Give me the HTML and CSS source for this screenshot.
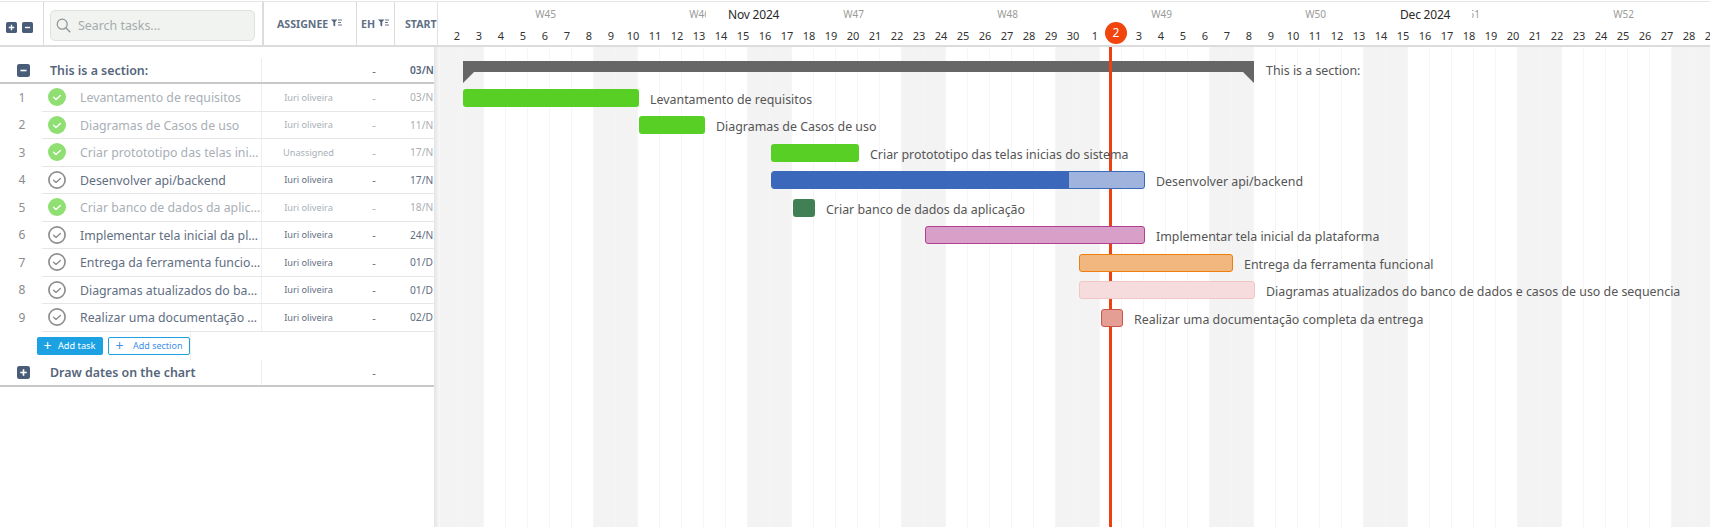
FILE: index.html
```html
<!DOCTYPE html>
<html lang="en">
<head>
<meta charset="utf-8">
<title>Gantt</title>
<link rel="stylesheet" href="styles.css">
</head>
<body>
<svg class="defs" width="0" height="0" aria-hidden="true">
  <symbol id="done" viewBox="0 0 18 18"><circle cx="9" cy="9" r="9" fill="#8fdf72"/><path d="M5.6 9.2l2.4 2.2 4.4-4" fill="none" stroke="#fff" stroke-width="1.4" stroke-linecap="round" stroke-linejoin="round"/></symbol>
  <symbol id="todo" viewBox="0 0 18 18"><circle cx="9" cy="9" r="8.1" fill="none" stroke="#8f8f8f" stroke-width="1.7"/><path d="M5.6 9.2l2.4 2.2 4.4-4" fill="none" stroke="#8a8a8a" stroke-width="1.3" stroke-linecap="round" stroke-linejoin="round"/></symbol>
  <symbol id="plusbox" viewBox="0 0 12 12"><rect width="12" height="12" rx="2" fill="#495d79"/><path d="M3 6h6M6 3v6" stroke="#fff" stroke-width="1.5"/></symbol>
  <symbol id="minusbox" viewBox="0 0 12 12"><rect width="12" height="12" rx="2" fill="#495d79"/><path d="M3.2 6h5.6" stroke="#fff" stroke-width="1.5"/></symbol>
  <symbol id="filter" viewBox="0 0 11 8"><path d="M0 .5h6.4L4.2 3V7.5L2.4 6.4V3z" fill="#55657c"/><path d="M7 1h4M7 3.5h3M7 6h4" stroke="#66758a" stroke-width="1"/></symbol>
</svg>
<div class="app">
  <section class="panel">
    <header class="thead">
      <div class="toggles">
        <svg class="tg"><use href="#plusbox"/></svg>
        <svg class="tg"><use href="#minusbox"/></svg>
      </div>
      <div class="searchcell">
        <div class="search">
          <svg class="mag" viewBox="0 0 15 15"><circle cx="6.2" cy="6.2" r="5" fill="none" stroke="#8d9296" stroke-width="1.2"/><path d="M9.8 9.8l4.4 4.4" stroke="#8d9296" stroke-width="1.3"/></svg>
          <span>Search tasks...</span>
        </div>
      </div>
      <div class="th th-a">ASSIGNEE<svg class="fl"><use href="#filter"/></svg></div>
      <div class="th th-e">EH<svg class="fl"><use href="#filter"/></svg></div>
      <div class="th th-s">START</div>
    </header>
    <div class="tbody">
      <div class="secrow first">
        <svg class="st"><use href="#minusbox"/></svg>
        <div class="sectitle">This is a section:</div>
        <div class="c-a"></div><div class="c-e">-</div><div class="c-s strong">03/N</div>
      </div>
      <div class="row done"><div class="num">1</div><svg class="chk"><use href="#done"/></svg><div class="title">Levantamento de requisitos</div><div class="c-a">Iuri oliveira</div><div class="c-e">-</div><div class="c-s">03/N</div></div>
      <div class="row done"><div class="num">2</div><svg class="chk"><use href="#done"/></svg><div class="title">Diagramas de Casos de uso</div><div class="c-a">Iuri oliveira</div><div class="c-e">-</div><div class="c-s">11/N</div></div>
      <div class="row done"><div class="num">3</div><svg class="chk"><use href="#done"/></svg><div class="title">Criar protototipo das telas inicias do sistema</div><div class="c-a">Unassigned</div><div class="c-e">-</div><div class="c-s">17/N</div></div>
      <div class="row"><div class="num">4</div><svg class="chk"><use href="#todo"/></svg><div class="title">Desenvolver api/backend</div><div class="c-a">Iuri oliveira</div><div class="c-e">-</div><div class="c-s">17/N</div></div>
      <div class="row done"><div class="num">5</div><svg class="chk"><use href="#done"/></svg><div class="title">Criar banco de dados da aplicação</div><div class="c-a">Iuri oliveira</div><div class="c-e">-</div><div class="c-s">18/N</div></div>
      <div class="row"><div class="num">6</div><svg class="chk"><use href="#todo"/></svg><div class="title">Implementar tela inicial da plataforma</div><div class="c-a">Iuri oliveira</div><div class="c-e">-</div><div class="c-s">24/N</div></div>
      <div class="row"><div class="num">7</div><svg class="chk"><use href="#todo"/></svg><div class="title">Entrega da ferramenta funcional</div><div class="c-a">Iuri oliveira</div><div class="c-e">-</div><div class="c-s">01/D</div></div>
      <div class="row"><div class="num">8</div><svg class="chk"><use href="#todo"/></svg><div class="title">Diagramas atualizados do banco de dados e casos de uso de sequencia</div><div class="c-a">Iuri oliveira</div><div class="c-e">-</div><div class="c-s">01/D</div></div>
      <div class="row"><div class="num">9</div><svg class="chk"><use href="#todo"/></svg><div class="title">Realizar uma documentação completa da entrega</div><div class="c-a">Iuri oliveira</div><div class="c-e">-</div><div class="c-s">02/D</div></div>
      <div class="addrow">
        <button class="btn btn-fill"><span class="pl">+</span>Add task</button>
        <button class="btn btn-line"><span class="pl">+</span>Add section</button>
      </div>
      <div class="secrow">
        <svg class="st"><use href="#plusbox"/></svg>
        <div class="sectitle">Draw dates on the chart</div>
        <div class="c-a"></div><div class="c-e">-</div><div class="c-s"></div>
      </div>
    </div>
  </section>
  <section class="chart">
    <header class="chead" id="chead">
      <div class="weeks">
        <span>W45</span><span>W46</span><span>W47</span><span>W48</span><span>W49</span><span>W50</span><span>W51</span><span>W52</span>
      </div>
      <div class="days" id="days"></div>
      <div class="month" style="left:269px">Nov 2024</div>
      <div class="month" style="left:941px">Dec 2024</div>
      <div class="today">2</div>
    </header>
    <div class="cbody">
      <div class="cols" id="cols"></div>
      <div class="nowline"></div>
      <div class="sbar-row"><div class="sbar" style="margin-left:23px;width:791px"></div><span class="blabel sl">This is a section:</span></div>
      <div class="brow"><div class="bar green" style="margin-left:23px;width:176px"></div><span class="blabel">Levantamento de requisitos</span></div>
      <div class="brow"><div class="bar green" style="margin-left:199px;width:66px"></div><span class="blabel">Diagramas de Casos de uso</span></div>
      <div class="brow"><div class="bar green" style="margin-left:331px;width:88px"></div><span class="blabel">Criar protototipo das telas inicias do sistema</span></div>
      <div class="brow"><div class="bar blue" style="margin-left:331px;width:374px"><i class="prog"></i></div><span class="blabel">Desenvolver api/backend</span></div>
      <div class="brow"><div class="bar dgreen" style="margin-left:353px;width:22px"></div><span class="blabel">Criar banco de dados da aplicação</span></div>
      <div class="brow"><div class="bar pink" style="margin-left:485px;width:220px"></div><span class="blabel">Implementar tela inicial da plataforma</span></div>
      <div class="brow"><div class="bar orange" style="margin-left:639px;width:154px"></div><span class="blabel">Entrega da ferramenta funcional</span></div>
      <div class="brow"><div class="bar lpink" style="margin-left:639px;width:176px"></div><span class="blabel">Diagramas atualizados do banco de dados e casos de uso de sequencia</span></div>
      <div class="brow"><div class="bar salmon" style="margin-left:661px;width:22px"></div><span class="blabel">Realizar uma documentação completa da entrega</span></div>
    </div>
  </section>
</div>
<script src="app.js"></script>
</body>
</html>
```
FILE: styles.css
```css
* { box-sizing: border-box; }
html, body { margin: 0; height: 100%; background: #fff; overflow: hidden; }
body { font-family: "Noto Sans", "Liberation Sans", sans-serif; color: #55657b; }
.defs { position: absolute; }
.app { display: flex; height: 526px; margin-top: 1px; border-top: 1px solid #e6e6e6; }

/* left panel */
.panel { position: relative; z-index: 3; width: 437px; flex: none; display: flex; flex-direction: column; }
.thead { display: flex; height: 45px; flex: none; border-bottom: 2px solid #dcdcdc; overflow: hidden; }
.toggles { width: 44px; flex: none; display: flex; gap: 5px; padding: 20px 0 0 6px; border-right: 1px solid #dcdcdc; }
.tg { width: 11px; height: 11px; }
.searchcell { width: 220px; flex: none; padding: 8px 7px 0 6px; border-right: 2px solid #dcdcdc; }
.search { height: 31px; display: flex; align-items: center; gap: 7px; padding-left: 5px; background: #f1f3f0; border: 1px solid #e0e2df; border-radius: 5px; font-size: 12.4px; color: #a6abaf; }
.mag { width: 15px; height: 15px; }
.th { display: flex; align-items: center; height: 43px; font-size: 10.6px; font-weight: 700; color: #5f6f85; border-right: 1px solid #dcdcdc; white-space: nowrap; }
.th-a { width: 93px; flex: none; padding-left: 13px; }
.th-e { width: 38px; flex: none; padding-left: 4px; }
.th-s { width: 40px; flex: none; padding-left: 10px; border-right: 0; }
.fl { width: 11px; height: 8px; margin: 0 0 2px 3px; flex: none; }

.tbody { position: relative; flex: 1; width: 434px; padding-top: 11px; }
.tbody::after { content: ""; position: absolute; left: 100%; top: 0; bottom: 0; width: 6px; background: linear-gradient(90deg, #e4e4e4, #f9f9f9); }
.secrow { display: flex; align-items: center; height: 27px; border-bottom: 2px solid #c8c8c8; }
.secrow.first { height: 26px; }
.st { width: 13px; height: 13px; margin-left: 17px; flex: none; }
.sectitle { width: 232px; flex: none; padding-left: 20px; font-size: 12.4px; font-weight: 600; color: #55657b; white-space: nowrap; align-self: stretch; display: flex; align-items: center; border-right: 1px solid #eee; }
.row { display: flex; align-items: center; height: 27.5px; margin-left: 42px; border-bottom: 1px solid #e6e6e6; color: #5f6e82; }
.num { width: 0; flex: none; margin-left: -20px; margin-right: 20px; font-size: 12px; color: #8a8a8a; display: flex; justify-content: center; }
.chk { width: 18px; height: 18px; margin-left: 6px; flex: none; }
.title { width: 196px; height: 100%; line-height: 27px; flex: none; padding: 0 0 0 14px; font-size: 12.3px; white-space: nowrap; overflow: hidden; text-overflow: ellipsis; border-right: 1px solid #eee; }
.c-a { width: 93px; flex: none; text-align: center; font-size: 9.2px; }
.c-e { width: 38px; flex: none; text-align: center; font-size: 11px; }
.c-s { padding-left: 17px; font-size: 10.2px; white-space: nowrap; }
.strong { font-weight: 600; color: #55657b; }
.done { color: #a9afb6; }
.done .num { color: #8f8f8f; }

.addrow { display: flex; align-items: center; gap: 5px; width: 191px; height: 28px; padding-left: 37px; border-right: 1px solid #eee; }
.btn { display: flex; align-items: center; flex: none; height: 18px; padding: 0; border-radius: 2px; font: 9.2px "Noto Sans", sans-serif; white-space: nowrap; }
.pl { font-size: 14px; line-height: 14px; width: 21px; text-align: center; }
.btn-fill { width: 66px; background: #1ca2e3; border: 0; color: #fff; }
.btn-line { width: 82px; background: #fff; border: 1px solid #1ca2e3; color: #3f8fe8; gap: 3px; font-size: 9px; }

/* chart */
.chart { flex: 1; min-width: 0; position: relative; overflow: hidden; }
.chead { position: relative; height: 45px; border-bottom: 2px solid #dcdcdc; box-shadow: inset 1px 0 #e2e2e2; }
.weeks { display: flex; height: 24px; padding-left: 31.5px; align-items: center; }
.weeks span { width: 154px; flex: none; text-align: center; font-size: 10px; color: #9a9a9a; }
.days { display: flex; padding-left: 9px; height: 19px; align-items: center; }
.days span { width: 22px; flex: none; text-align: center; font-size: 11px; color: #333; }
.month { position: absolute; top: 4px; padding: 0 22px; background: #fff; font-size: 12px; letter-spacing: -0.2px; color: #2a2a2a; white-space: nowrap; }
.today { position: absolute; left: 668px; top: 20px; width: 22px; height: 22px; border-radius: 50%; background: #f2440d; color: #fff; font-size: 12px; text-align: center; line-height: 22px; }

.cbody { position: relative; height: 480px; padding-top: 10px; padding-left: 3px; }
.cols { position: absolute; left: 3px; top: 0; bottom: 0; display: flex; }
.cols i { width: 22px; flex: none; border-right: 1px solid #f5f5f5; }
.cols i.we { background: #f3f3f3; }
.nowline { position: absolute; left: 672px; top: 0; bottom: 0; width: 3px; background: #ee4112; z-index: 1; }
.sbar-row { position: relative; display: flex; height: 27px; padding-top: 4px; }
.sbar { height: 22px; flex: none; background: #666; clip-path: polygon(0 0, 100% 0, 100% 100%, calc(100% - 11px) 11px, 11px 11px, 0 100%); }
.brow { position: relative; z-index: 2; display: flex; align-items: center; height: 27.5px; }
.bar { position: relative; flex: none; height: 18px; border-radius: 3px; overflow: hidden; }
.blabel { margin-left: 11px; padding-top: 3px; font-size: 12.4px; color: #555; white-space: nowrap; }
.sl { padding-top: 0; line-height: 28px; margin-top: -4px; margin-left: 12px; }
.green { background: #57cf25; }
.dgreen { background: #417f55; }
.blue { background: #9fb3dd; border: 1px solid #3c68bb; }
.prog { display: block; width: 297px; height: 100%; background: #3c68bb; }
.pink { background: #d89fc9; border: 1px solid #b33f90; }
.orange { background: #f2b77e; border: 1px solid #ec7f0e; }
.lpink { background: #f6dcdc; border: 1px solid #f3c6c6; }
.salmon { background: #e49e94; border: 1px solid #c9554a; }
```
FILE: app.js
```js
var days = document.getElementById('days');
var cols = document.getElementById('cols');
var seq = [];
for (var d = 2; d <= 30; d++) seq.push(d);
for (var e = 1; e <= 31; e++) seq.push(e);
seq.forEach(function (n, i) {
  var s = document.createElement('span');
  s.textContent = n;
  if (i !== 30) days.appendChild(s);
  else { s.textContent = ''; days.appendChild(s); }
  var c = document.createElement('i');
  if (i % 7 === 0 || i % 7 === 1) c.className = 'we';
  cols.appendChild(c);
});
```
